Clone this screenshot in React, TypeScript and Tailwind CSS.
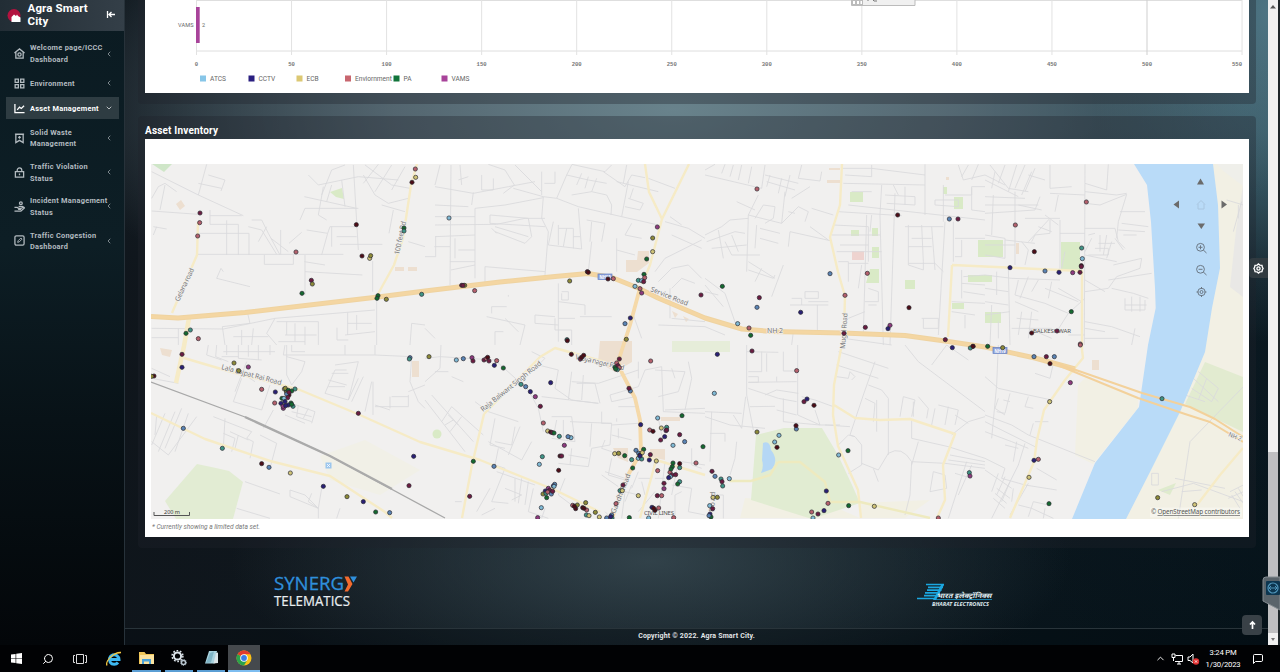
import React from "react";
import { LuChevronLeft, LuChevronDown, LuSearch, LuMessageSquare, LuChevronUp } from "react-icons/lu";

type Tile = { x: number; y: number; streets: string; dots: string };

const dotColors: Record<string, string> = {
  c: "#7fb9d4",
  b: "#5a84b4",
  n: "#2a2075",
  y: "#cfc377",
  o: "#8d8a38",
  r: "#b5606c",
  g: "#14692f",
  t: "#3f9485",
  v: "#8e3a7e",
  p: "#6b1c40",
  m: "#4d0d16",
};

/* Streets and markers of each map tile; one map pixel is three tile units. */
const tiles: Tile[] = [
  {
    x: 145,
    y: 155,
    streets:
      "M20 50L160 120L295 182M160 120L185 28M20 168L160 178M195 165V208H280V300M195 182H290M245 196V300M158 235H312V300M158 298H595M358 300V328H445V300M20 130L40 95L60 85L95 110M60 90L45 165M190 60L240 75L228 108M160 85L230 100M25 215L65 222M25 240L35 215M320 195L350 195L370 235L405 300M310 215L350 225L395 298M340 260L365 215M407 225V298M378 250L430 290M432 265L470 232M480 300V420M480 350L652 360M478 320L540 330M215 370L315 395M215 370L228 340L235 350M485 225L548 235L555 215H635M548 235L530 300M560 215V275M575 245H635M585 268H712M625 30L640 285M640 160H480L465 195M478 125L635 160M490 60L520 90L640 65L760 75M530 120L560 45L600 30M535 95L520 180L545 195M560 90L545 140M590 75L600 155M655 60L690 120L730 145L790 130M660 30L740 90L795 100M700 28L655 85M740 30L690 110M780 35L740 105M710 150L780 170M745 165L732 235M790 260L840 275M683 318V410M20 520L235 522L390 490L690 465M308 475L315 505L232 515L240 570M390 490L365 535L395 570M395 500H520V570M425 500V540M450 505V560M480 515V570M420 540H515M290 525V570M265 545H370M325 520L320 570M400 560H480M608 472V540M635 480V525M608 505H680M600 540L690 530M576 518V555H610M695 430V570M795 570L800 505L840 510M20 548H100M100 570V520",
    dots: "r811,42 y812,67 m801,82 p165,174 r164,203 r158,243 m634,209 g777,219 t777,228 r453,291 m651,303 y674,310 o677,302 p499,376 o502,387 g471,415 g699,422 g696,430 o724,433 t830,418 t136,525 g123,535 r160,551",
  },
  {
    x: 425,
    y: 155,
    streets:
      "M78 30L75 390M30 95L145 115L250 95L330 80M145 112L140 150M30 150L130 155M30 185H150M30 210L215 208L300 190H360M30 245L150 240M28 275H75M32 245V305H0M90 250V310M100 285H150M75 320H150M78 345L150 330M150 160V370M190 28L240 45L268 90L235 115M170 60V105H205V70M105 30L110 90M130 65L100 75M45 30L30 90M265 100L355 125L350 190L370 230L360 360M355 125L395 130L460 155L590 185L700 210M350 50V120M270 30L350 110M358 85H390V50M395 130L425 60L440 30M425 60L490 75L545 85M440 120L500 110L545 120L560 150L558 180M470 55L455 90M490 65L480 100M515 70L500 110M535 50L600 95L620 60L660 68M575 80L700 110M610 80L590 185M610 130L655 145L645 165L600 155M625 100L615 130M440 28L540 50L560 30M605 30L595 85M150 160L240 150L355 128M195 180V205L360 215M195 180L310 190L320 245L300 265L210 230M210 215L310 245M215 235L200 220M385 200L370 270L470 282L460 160M400 210V270M425 220L415 275M400 220H445V280M445 245H465M485 195L540 205L530 260M500 200L495 260M500 260L490 350M575 250V350M575 285L630 300M620 205L600 240L650 250M180 335L360 350M180 335V388M250 420V425M400 385V560M410 415V435H430V410H410M400 440L480 450V480M200 475V455H245M185 485L300 510L285 570M240 490L280 530M235 530H210V570M330 480V505L400 510M330 480L390 485M400 490H450M390 490V525H440V570M465 485H560M0 520L30 550M690 350L720 310L830 255M700 380L740 340L790 330L830 370M740 400L770 370L810 385M740 240L830 280M720 200L790 220L840 250M735 185L770 210M670 70L750 100M735 400V490M700 510L840 515M740 490L840 500M650 550L625 480",
    dots: "c72,189 v697,216 o683,249 y683,290 g665,312 m487,350 m490,352 o434,378 o119,391 p110,391 p114,391 r149,407 m549,372 r565,371 g657,358 r659,368 t640,376 c650,377 p656,380 c630,394 r645,401 v650,414 n616,489 b600,506 o604,553 p828,420 t426,554 m427,557",
  },
  {
    x: 705,
    y: 155,
    streets:
      "M0 45L30 28M0 60L170 100L180 30M60 28L50 55M85 30L75 65M110 30L100 75M140 35L130 85M180 60L280 85M185 80L270 105M195 60L185 95M230 70L220 115M255 60L240 125M160 120L130 180L125 350M95 140L150 165M130 180L230 205M150 190L175 150L210 155L205 190L180 205M165 220L225 235M240 110L230 205L280 155L310 170L300 200M260 130L315 95M270 175L250 170M0 240L50 215L75 195L130 190M40 225L55 310M5 260L90 230L120 235M20 280L125 270M60 260L80 300H165M80 240L100 290M155 210L150 280M165 250L220 265M250 275L255 230L380 258M315 215L370 255M320 160L385 180M130 320L210 370M130 345L205 370L210 360M170 340L150 380M200 425L235 330M60 415L95 515M0 370L60 415M0 410L40 420M280 70L345 78L350 50M280 70L290 30M0 390L55 455M255 450H370M260 430H290V450M300 410H340V430H300V410M310 440H370M337 450V525M410 40H500L660 60M415 85L660 90M420 60L500 65V30M440 110H500M430 150L840 195M400 170L590 182M530 90L525 180L535 570M570 115L555 570M540 120L630 125V150L545 145M660 28V180M565 90L580 120M600 95V150M690 135H760V155L690 150V135M715 90V200M720 120H800V95H840M760 30L775 75L840 60M790 30L770 65M820 28L800 75M720 200L700 540M610 210V330L655 345V320M620 250H680M650 210L655 320M680 215L690 345M600 215H715M610 275H680M610 325H690L715 350M380 240H490M385 210L490 215V320M405 270H490M395 290H530M400 320H430V380M430 325H490M470 330L460 400M485 180L475 540M525 240H490M500 180L495 230M430 490L480 470M490 400L520 410V440H480M490 450H515M650 490H700V520H655V490M745 200V320M750 250H840M770 255V305H750M770 345V430M770 385L840 390M775 365L840 360M775 410L840 420M740 440L840 445M740 470L810 480M780 480V520M800 100V165L840 170M265 530L260 570M415 550L560 570M0 515L60 540",
    dots: "r156,102 m578,180 b733,192 p759,192 b375,356 r487,355 r420,421 g52,394 p163,428 b156,457 n287,472 m612,458 c98,506 r132,519 g137,541 p481,517 v555,511 n549,521 p417,535 p721,554 p804,574",
  },
  {
    x: 985,
    y: 155,
    streets:
      "M15 30L70 100L130 110M60 30L40 85M95 30L70 110M140 50L110 120M120 30L90 100M0 60L60 90M30 50L20 100M150 40L120 110M0 75L100 125M130 60L180 75M300 28L298 570M300 85L365 105L370 28M300 110L395 120L425 115M300 145L345 150L425 118L400 200L395 250M405 170H480M410 205L490 215M400 225L480 230M195 30V100L260 95M195 115L300 120M220 120L210 170M165 125L150 165L0 175M0 125L120 130M90 110V330M25 120L20 240M0 150H160M100 150L170 165M180 180L220 210M195 190L130 260M195 195V235L150 240L140 260M160 215L200 230M225 195V350M225 235H300M120 190H225M110 260L130 285L120 330M0 240L60 250V310L0 300M0 270H90M60 255L150 265M240 290L230 340M300 220H390L400 260L420 280M310 240L330 235M320 250L300 290M330 280H370V300H310M345 240V290M365 240L355 300M380 260L365 310M340 265H390M390 250L415 285M415 240H455M300 300L395 320M385 330L470 310L465 340L395 365L370 400L300 410M300 375L360 410M380 400L445 415L490 430M420 430V465H480V435M440 425V470M465 425V470M420 450H485M370 375L500 355M0 360L80 370L225 375M70 335L75 570M100 375L90 420L180 445M130 365L105 430M160 375L140 410M180 400L280 440M200 380L190 430M220 400L290 440M180 445L250 475L300 430M250 475L215 530M90 440L160 470M110 470L100 540M140 470L130 550M95 490L160 495M80 520H200M130 520L200 550M0 400L70 410M0 440L70 450M20 450L15 570M35 350V420M0 480L75 470M40 500V550M300 500L380 515L465 545M300 520L360 530M300 550H400M450 520L440 570M250 540H300M725 135L775 150M770 140L745 230M760 150V190",
    dots: "r304,141 r91,210 m148,290 t290,279 c292,311 m289,332 p289,335 p285,352 v263,353 n222,352 b180,348 n75,338 g259,470 p216,528 m140,534 r286,567",
  },
  {
    x: 145,
    y: 345,
    streets:
      "M20 100L100 115M190 0L185 30L230 45M215 0L212 35L250 50M245 0V30M280 0V40L350 45M310 0V35M340 0V45M375 0V30M235 20H390M230 35H280M420 0L415 30H600L690 30V0M425 0V90L440 120M425 35L480 50L470 80L440 120M440 0V20H480M600 0V30M690 30L800 35M800 35L795 110L820 170L840 190M605 75H570L540 145L610 165L640 50M570 60L640 50M560 85H610M550 105L605 120M550 125H600M610 165L640 100M655 95L620 170M680 110L660 200M684 110V210M690 185H790V150M735 155V190M740 155H790M690 180L735 195M790 140L840 120M305 50L270 140M290 100L265 170L350 195L375 120M300 90L330 110M440 175L510 200L500 235M460 180L455 215L500 230M490 190L475 220M440 200L500 215M420 210L480 235M385 195L355 250M205 215L320 260L305 280L325 290L315 340M240 220L235 310M255 260L310 285M235 265L270 280L260 320M280 270L270 310M345 270L395 295L375 370M110 190L60 310M130 205L90 320M155 215L70 330M35 210L30 270M60 205L20 300M90 200L40 320M20 290L70 330M300 410L405 447M275 490L375 520M435 435L480 450L520 490L530 430M435 455L520 490V520M435 435V455M520 490L490 470L500 445M585 490L575 520M20 70L75 95",
    dots: "p111,28 n111,67 o267,54 o281,77 v310,66 r350,133 n391,141 r389,174 m27,93 o20,94 y418,132 g424,136 o421,130 o425,142 g430,136 t450,132 g440,138 m432,150 b425,147 p428,158 g411,160 c417,160 n420,170 n408,175 g438,174 n430,180 t444,184 v415,190 v414,184 n422,182 g440,178 p432,142 b115,250 t232,310 m350,356 b372,367 y436,384 n535,424 o606,455 n655,470 g692,501 b734,503 p640,205 n806,334 p792,422 b795,38 t793,42",
  },
  {
    x: 425,
    y: 345,
    streets:
      "M48 0L45 70L0 110M0 40L45 35L210 45L310 135L340 190L355 260M70 80H30M80 95L115 110M0 165L120 320M20 150L145 290M50 230L80 185L175 270M75 260L110 215M100 240L70 210M85 225L60 240M150 170L190 200L280 230M320 20L360 40L340 60L400 75L390 130L440 165L520 175M440 80L430 165M455 115H510L525 175M475 90L470 165M440 110L520 115L640 75M350 155L520 175M555 150L640 125L660 75L710 65L715 200M555 150L560 170L630 155M580 185H640M690 75L780 80L760 140L700 155M790 50L800 100L780 195M640 50V100M740 70L750 100M715 200L840 205M720 195L840 190M700 220L710 270M210 220L195 300L240 310M270 245L260 300L210 290M285 245L250 330M190 290L290 345L320 290M380 215H440L450 290L380 280M395 225L385 275M415 225V280M435 230L560 235L555 300L500 310L490 365L400 355M500 235L495 305M530 200V235H560M560 240L640 235M540 285L530 310L560 320M575 220V230M560 270L620 285M580 250V280M440 310L435 360M430 330L490 340M220 310L210 360L240 370L200 470L250 475M195 430L155 500M240 430L290 450L260 465M270 400V470M290 400L280 475M310 410L300 480M215 380L330 420M325 430L310 500L370 520M360 490L350 520M540 380L600 400M530 390L580 425M560 340L550 390L600 405M620 420L600 470M640 380L620 430M690 340L680 400L640 400M720 350L700 520M760 350L740 450M770 350L840 360M740 420L800 430L790 500L840 510M800 310V360L830 370M650 410L660 450M640 500L690 440M590 520L600 440L640 450M690 400H720M420 400L400 450L440 480M560 520L540 500M750 510V450L770 440M90 470H110M170 510L210 490",
    dots: "o12,35 c94,45 b115,41 v141,38 p144,48 p177,45 r184,41 m188,37 p192,48 n208,61 r215,47 g235,69 t288,118 b302,125 n316,140 v331,155 p346,184 r355,234 y368,258 m377,261 p382,263 g387,264 t403,274 c438,278 b429,275 v418,301 m405,333 p410,333 t352,335 c343,358 m401,376 g145,349 b207,364 p134,454 n377,113 m439,28 p466,42 m470,37 m476,31 p583,42 r575,54 g570,67 p579,62 r583,68 t577,74 g572,72 b616,138 p612,130 r677,48 n647,239 c698,219 g771,212 r674,255 m684,259 y709,249 t725,247 v723,257 p725,255 n719,275 p707,285 p764,269 b779,290 c744,301 g834,305 b633,316 g656,313 b641,325 m645,330 y652,323 c640,340 t650,342 y569,326 o581,325 g599,332 t620,344 p676,329 n673,345 y694,348 g623,369 n645,333 g744,354 g742,365 t764,368 m764,356 r813,354 r698,377 r735,382 g738,372 p741,390 c736,395 n731,398 p752,389 p717,415 v717,431 t764,410 g758,417 p594,420 t585,437 y592,437 y640,452 p697,452 r710,452 n681,487 m690,496 r701,489 c671,519 r746,518 m686,490 b389,418 n385,423 c387,424 v370,430 n361,438 p374,436 o354,447 t363,445 b379,447 p383,439 g365,458 r368,441 c349,488 v338,518 r573,476 b560,510 b545,519 t561,519 n557,515 g613,518 r443,481 o457,480 m452,491 o482,473 m473,488 r485,495 t484,510 y492,512 o511,502 y523,516 m448,484 m477,490",
  },
  {
    x: 705,
    y: 345,
    streets:
      "M125 0V150L145 255M125 20L220 22M170 20V80M185 25V80M170 80H130M130 95H160V112H130M130 130L220 160L275 170M130 112L275 110M235 20V78H275M278 0V210L345 240M180 150L215 135L280 145M135 185L210 184M122 155L110 250L85 210M215 95V110M0 200L110 205M0 215L75 240L180 250M235 160V230M345 240L405 240M345 240L330 195M235 230L345 240M275 210L215 195M290 155L330 165L385 185M360 240L435 245M20 200L15 350M15 265H60V290M95 290L90 340L75 390M400 20L550 70M395 60L520 100M395 95L430 100L435 80L450 95L440 105M510 50L475 150L435 270L450 275L470 300V360L430 385M470 355L520 375L550 325Q590 300 620 350L615 450L600 510M490 120L530 135L550 160V330M400 300L430 270L450 275M515 165V260M480 160L510 175L505 230M505 370L520 410M595 155L585 215M595 155L630 165L620 215M640 155L670 190L665 220M625 170V215M690 190L680 240M700 180L760 195L750 240M730 185L720 240M620 225V280L730 305L840 340M620 350L720 355L840 370M735 330L840 350M730 345L840 360M740 270L790 230L840 215M600 0L640 50L840 200M680 60L725 0L790 45M785 350L730 520M800 360L760 450M685 380L720 390L725 430L675 440L685 380M750 385L800 400M750 210L790 235M55 450V520M20 450H55M640 290L620 360",
    dots: "n37,28 p141,18 c28,145 r275,77 p297,170 n306,162 m327,181 o156,261 c222,271 c209,291 m216,307 b274,252 m273,242 c401,330 g429,317 g431,482 n364,438 r369,475 r320,501 p339,507 n357,497 c324,519 y508,484 r700,519 t793,383 v795,393 p21,379 b30,394 t48,402 p51,410 t53,423 c73,401 y24,457 o37,457 p23,491 c14,482 n15,507 g18,516 b12,512 n742,8 t796,9 m804,4",
  },
  {
    x: 985,
    y: 345,
    streets:
      "M40 0L35 120L20 280M0 95L40 130L130 150L200 165M75 145L60 205L35 200M130 155L120 185L145 190M40 160L30 190L60 210M55 165L75 170M150 85L195 100L205 55M0 210L80 240L130 270L330 350M0 230L60 260L150 305M0 260L80 290L130 310M95 290L85 350M120 295L100 360L20 520M60 300L100 310M0 340L60 370L50 400L120 420L215 435M0 375L80 430M40 385L20 440M60 395L35 450M75 410L50 470M25 460L60 490M30 445L65 475M35 430L75 460M130 415L75 510M155 370L215 405M145 470L190 480M150 230H190M145 235L135 270M85 430L80 470M100 480L140 490L205 520M145 470L130 515M180 490L175 520M775 125L615 290L580 520M640 80L700 130L680 170L620 130M625 100L700 170M600 150L660 170M665 100L640 165M530 440L625 415L720 450L775 470M590 440L650 435M570 400L720 430M500 385V420H520V385H500M735 440L775 420M740 450L765 490M750 440L775 475M760 430L775 455M730 460L775 440",
    dots: "g8,4 o53,8 b147,35 p184,35 b208,35 m195,56 v256,113 y194,170 t531,161 r160,343 n147,346 y132,397 g192,476 o518,458 y629,479 r286,0",
  },
];

function Dots({ tile }: { tile: Tile }) {
  return (
    <g stroke="#26262e" strokeWidth="2">
      {tile.dots.split(" ").map((d, i) => {
        const [x, y] = d.slice(1).split(",").map(Number);
        return <circle key={i} cx={x} cy={y} r="6.300" fill={dotColors[d[0]]} />;
      })}
    </g>
  );
}

const highway =
  "M151 316.500L178 318L245 312.500L378 297L425 291L500 282L555 276.500L588 273.500L612 277.500L638 288L658 298L705 318L742 329L772 331.500L843 333L905 335.500L945 341L985 347L1035 358L1075 369";

function CityMap() {
  return (
    <svg width="1092" height="355" viewBox="151 164 1092 355" className="block" fontFamily="Noto Sans, sans-serif">
      <rect x="151" y="164" width="1092" height="355" fill="#f1f0ef" />
      <path d="M1151 164H1243V519H1126L1212 308Z" fill="#f2f0e4" />
      <path d="M1243 185L1236 230L1230 287L1243 297Z" fill="#e9e8e6" />
      <path d="M1217 164H1243V186L1222 170Z" fill="#efefea" />
      <path d="M1085 378L1138 397V408L1093 464L1075 455L1078 385Z" fill="#f2f0e4" />
      <path d="M1205 362L1243 377V432L1185 404Z" fill="#e2ebd0" />
      <path d="M1158 490L1176 483L1170 495Z" fill="#dfebcd" />
      <path d="M320 456L365 440L420 470L380 495L330 480Z" fill="#f1f0e7" />
      <path d="M745 498L830 505L860 518H740ZM860 503L930 500L905 518H860Z" fill="#f2f0e4" />
      <path d="M197 464L216 468L229 471L243 482L233 519H176L165 501Z" fill="#e2ecd3" />
      <path d="M756 435L784 428H822L838 455L852 485L860 503L812 519L751 500Z" fill="#e1ecd2" />
      <path d="M152 164H172L164 172Z" fill="#cfe6c8" />
      <g fill="#d9eac6">
        <path d="M330 192L342 188L344 199L336 197Z" />
        <path d="M850 192H863V202H850ZM872 228H878V236H872ZM872 247H879V258H872ZM870 269H879V283H866ZM905 280H915V289H905ZM954 197H963V209H954ZM978 240H1003V257H978ZM968 275H992V282H968ZM1061 242H1080V270H1061ZM952 303H964V309H952ZM985 312H1001V323H985Z" />
        <path d="M851 230H859V236H851ZM943 187H947V194H943Z" />
        <circle cx="437" cy="434" r="4.500" />
        <path d="M672 341H730V352H672Z" fill="#e6edd9" />
      </g>
      <g fill="#eddfd0">
        <path d="M176 204L181 200L185 206L180 210ZM638 251H649V263L637 272H626V260H637ZM600 341H632V362L615 372L598 362ZM395 267H404V271H395ZM408 267H417V271H408ZM650 449H665V460L650 457ZM613 448H628V462L618 458ZM412 361H419V377H412Z" />
        <path d="M829 168H840V170H829ZM827 180H840V183H827ZM160 348L172 350L170 357L162 355ZM946 177H949V180H946ZM672 311L678 314L675 318ZM683 316L689 319L686 322ZM661 417H680V421H661ZM1092 360H1099V370H1092ZM1016 243H1019V254H1016Z" />
        <path d="M852 251H864V260H852Z" fill="#eed3cf" />
      </g>
      <path d="M763 443Q770 440 771 450Q779 460 772 469L761 473Q764 467 762 460Z" fill="#b5d7f5" />
      {tiles.map((t, i) => (
        <g key={i} transform={`translate(${t.x} ${t.y}) scale(.33333)`}>
          <path d={t.streets} fill="none" stroke="#dadadc" strokeWidth="2.600" strokeLinejoin="round" />
        </g>
      ))}
      <path
        d="M1134 164L1147 185L1151 222L1155 288L1155.7 308L1148 345L1147 352L1139 407L1095 463L1072 519H1126L1150 472L1180 412L1205 352L1212 308L1220 268L1218 205L1213 164Z"
        fill="#b9dbf8"
      />
      <g fill="none" stroke="#f6ebc6" strokeWidth="2.400" strokeLinejoin="round">
        <path d="M198 222L197 255L172 313M417 164L411 185L403 238L394 265L378 294" />
        <path d="M189 318L184 346L176 383" strokeWidth="4.500" />
        <path d="M184 358L228 371L300 390L360 415L420 442L480 460L555 490L600 512" />
        <path d="M151 413L205 439L270 461L330 476L385 512L392 518" />
        <path d="M645 164L649 192L662 219L689 164M662 219L650 265L642 284" />
        <path d="M842 164L840 205L830 237L838 272L845 296L844 333L834 385L833 415L838 446L858 490L861 518" />
        <path d="M834 405L855 418L880 420L910 419L955 434L943 465L945 500L937 518" />
        <path d="M952 265L948 337M952 265L1082 271V350L1083 358L1065 380L1044 410L1037 440L1034 462L1010 518" />
        <path d="M751 481L730 481M751 481L770 475L778 462M778 462L800 462L825 482L830 502L860 502L930 518" stroke="#eeeabf" />
        <path d="M484 414L472 465L462 518M484 414L540 357L555 348L605 362" />
        <path d="M640 455L705 475M657 457L640 518M1243 448L1220 475L1197 505" />
      </g>
      <g fill="none" strokeLinejoin="round">
        <path d={highway} stroke="#efd3a0" strokeWidth="5" />
        <path d={highway} stroke="#f4d6a2" strokeWidth="3" />
        <path d="M640 288L630 325L618 362L622 373L635 398L640 420L641 452L628 475L612 518" stroke="#f5d9a9" strokeWidth="3.800" />
        <path d="M1050 361L1142 393L1190 407L1215 419L1243 437M1060 366L1138 398L1185 414L1210 422L1243 442" stroke="#f3d19b" strokeWidth="2" />
      </g>
      <path d="M151 382L245 417L330 456L445 518" fill="none" stroke="#a8a8a8" strokeWidth="1.300" />
      <path d="M245 417L330 456L392 489" fill="none" stroke="#aaa" strokeWidth="2.400" />
      <g transform="translate(325.500 462.500)">
        <rect width="6" height="6" fill="#9cc6ee" />
        <path d="M1.500 1.500L4.500 4.500M4.500 1.500L1.500 4.500" stroke="#fff" strokeWidth=".8" />
      </g>
      <g fontSize="7" fill="#777" stroke="#f1f0ef" strokeWidth="1.400" paintOrder="stroke">
        <text transform="translate(179 302) rotate(-65)" textLength="36">Gelana road</text>
        <text transform="translate(399 255) rotate(-78)" textLength="34">100 feet Rd</text>
        <text transform="translate(221 369) rotate(15)" textLength="62">Lala Lajpat Rai Road</text>
        <text transform="translate(483 412) rotate(-39)" textLength="76">Raja Balwant Singh Road</text>
        <text transform="translate(650 291) rotate(22)" textLength="40">Service Road</text>
        <text transform="translate(575 359) rotate(13)" textLength="50">Vijaya nagar Road</text>
        <text x="767" y="333" textLength="16">NH 2</text>
        <text transform="translate(845 349) rotate(-86)" textLength="36">Mugal Road</text>
        <text transform="translate(1228 436) rotate(22)" fontSize="6.500" textLength="13.500" lengthAdjust="spacingAndGlyphs">NH 2</text>
        <text transform="translate(615 514) rotate(-68)" textLength="42">Gandhi Road</text>
        <text transform="translate(714 512) rotate(-86)" textLength="20">Road</text>
      </g>
      <g fill="#8fa5dc" stroke="#657fc4" strokeWidth=".7">
        <rect x="598" y="274" width="14" height="5.500" />
        <rect x="993" y="347.500" width="14" height="6" />
      </g>
      <g fontSize="5.500" fontWeight="700" fill="#fff">
        <text x="599.500" y="278.800" textLength="11" lengthAdjust="spacingAndGlyphs">NH19</text>
        <text x="994.500" y="352.600" textLength="11" lengthAdjust="spacingAndGlyphs">NH19</text>
      </g>
      <g fontSize="6" fill="#555">
        <text x="1033" y="333" textLength="38">BALKESHWAR</text>
        <text x="644" y="514.500" textLength="30">CIVIL LINES</text>
      </g>
      {tiles.map((t, i) => (
        <g key={i} transform={`translate(${t.x} ${t.y}) scale(.33333)`}>
          <Dots tile={t} />
        </g>
      ))}
      <g fill="#6b6b6b">
        <path d="M1197 184.500L1200.500 178.500L1204 184.500Z" />
        <path d="M1197.500 223.500H1205L1201.300 229Z" />
        <path d="M1179 200.500V208.500L1173.500 204.500Z" />
        <path d="M1221.500 200.500V208.500L1227 204.500Z" />
      </g>
      <path d="M1197 204.500L1201 200.500L1205 204.500M1198 204V209H1204V204" fill="none" stroke="#a9c6e0" />
      <g fill="none" stroke="#6b7885" strokeWidth="1">
        <circle cx="1200.500" cy="247.300" r="3.900" />
        <path d="M1203.300 250L1206.500 253M1198.500 247.300H1202.500M1200.500 245.300V249.300" />
        <circle cx="1200.500" cy="269.300" r="3.900" />
        <path d="M1203.300 272L1206.500 275M1198.500 269.300H1202.500" />
        <circle cx="1201.500" cy="292" r="3.700" />
        <circle cx="1201.500" cy="292" r="1.500" />
        <path d="M1201.500 287V289M1201.500 295V297M1196.500 292H1198.500M1204.500 292H1206.500" />
      </g>
      <path d="M154 512V515.500H189.500V512" fill="none" stroke="#555" strokeWidth="1" />
      <text x="164" y="514" fontSize="5.500" fill="#333" textLength="16">200 m</text>
      <rect x="1150" y="507.500" width="92" height="10" fill="#fff" opacity=".35" />
      <text x="1151" y="514.300" fontSize="6.300" fill="#555" textLength="5">©</text>
      <text x="1157.500" y="514.300" fontSize="6.300" fill="#555" textDecoration="underline" textLength="82.500">OpenStreetMap contributors</text>
    </svg>
  );
}

function AssetChart() {
  const legend = [
    ["ATCS", "#87c6e8", 200],
    ["CCTV", "#2a1f80", 248.500],
    ["ECB", "#dcc873", 296.500],
    ["Enviornment", "#c8666f", 345],
    ["PA", "#11743a", 393.500],
    ["VAMS", "#a8439a", 441.500],
  ] as const;
  return (
    <svg width="1104" height="93" viewBox="145 0 1104 93" className="block" fontFamily="Roboto, sans-serif">
      <path d="M196 .5H1242M196 51H1242" stroke="#dedede" />
      {Array.from({ length: 12 }, (_, i) => (
        <g key={i}>
          <path d={`M${196.500 + i * 95.050} 0V55`} stroke={i === 10 ? "#cfcfcf" : "#e2e2e2"} />
          <text
            x={i === 11 ? 1237 : 196.500 + i * 95.050}
            y="66"
            fontSize="5.600"
            fontFamily="Liberation Mono, monospace"
            fontWeight="700"
            fill="#777"
            textAnchor="middle"
          >
            {i * 50}
          </text>
        </g>
      ))}
      <rect x="196" y="7" width="3.700" height="36" fill="#a8439a" />
      <text x="178" y="26.500" fontSize="5.600" fill="#666" textLength="15.500">VAMS</text>
      <text x="202" y="26.500" fontSize="5.500" fill="#666">2</text>
      {legend.map(([name, color, x]) => (
        <g key={name}>
          <rect x={x} y="75.500" width="6" height="6" fill={color} />
          <text x={x + 10} y="81" fontSize="6.600" fill="#666">{name}</text>
        </g>
      ))}
      <path d="M851.500 0V5.500H915V0" fill="#f0f0f0" stroke="#bbb" />
      <path d="M852 0H863V5H852Z" fill="#bbb" />
      <path d="M853 1H855V4H853ZM857 1H859V4H857ZM860.500 1H862V4H860.500Z" fill="#fff" />
      <path d="M867 0H869M873 0L874 1H877" stroke="#777" fill="none" />
    </svg>
  );
}

function Icon({ children }: { children: React.ReactNode }) {
  return (
    <svg width="11" height="11" viewBox="0 0 24 24" fill="none" stroke="currentColor" strokeWidth="2.800" className="shrink-0">
      {children}
    </svg>
  );
}

const menu: { label: string[]; icon: React.ReactNode; active?: boolean }[] = [
  {
    label: ["Welcome page/ICCC", "Dashboard"],
    icon: <Icon><path d="M1 11L12 2L23 11M4 9V22H20V9" /><circle cx="12" cy="14" r="3.500" /></Icon>,
  },
  {
    label: ["Environment"],
    icon: <Icon><path d="M2.500 2.500H9.500V9.500H2.500ZM14.500 2.500H21.500V9.500H14.500ZM2.500 14.500H9.500V21.500H2.500ZM14.500 14.500H21.500V21.500H14.500Z" /></Icon>,
  },
  {
    label: ["Asset Management"],
    active: true,
    icon: <Icon><path d="M2 2V21H23M7 15L12 9L16 12L22 6" /></Icon>,
  },
  {
    label: ["Solid Waste", "Management"],
    icon: <Icon><path d="M4 3H20V21L12 16L4 21ZM2 2.500H22M12 6.500V12.500M9 9.500H15" /></Icon>,
  },
  {
    label: ["Traffic Violation", "Status"],
    icon: <Icon><path d="M3 10H21V22H3ZM7 10V7A5 5 0 0 1 17 7V10M12 14V18" /></Icon>,
  },
  {
    label: ["Incident Management", "Status"],
    icon: (
      <Icon>
        <path d="M1 14H7L10 16H14V18H9M14 17L21 13L23 15L15 22H1" />
        <circle cx="15" cy="5" r="3" />
        <path d="M10 12H20" />
      </Icon>
    ),
  },
  {
    label: ["Traffic Congestion", "Dashboard"],
    icon: <Icon><rect x="2" y="2" width="20" height="20" rx="3" /><path d="M8 16L9 12.500L15 6.500L17.500 9L11.500 15Z" strokeWidth="2" /></Icon>,
  },
];

function Sidebar() {
  return (
    <aside className="flex w-[125px] shrink-0 flex-col border-r border-[#27323a] bg-[linear-gradient(180deg,#0b1b22_0%,#0d1e25_38%,#081217_65%,#030609_100%)]">
      <header className="flex h-[31px] items-start bg-[linear-gradient(90deg,#222d35,#343f48)] pl-[7px] pt-[1.500px]">
        <svg width="16" height="18" viewBox="0 0 16 18" className="mt-[5px] shrink-0">
          <circle cx="7" cy="8.500" r="6.500" fill="#b3123f" />
          <path d="M4.500 15V10L7 7.500L9 9L10 7.500L11 9L13.500 10.500V15Z" fill="#fff" />
        </svg>
        <div className="ml-[4.500px] w-[70px] text-[11.500px] font-bold leading-[13.200px] tracking-[.15px] text-white">
          Agra Smart
          <br />
          City
        </div>
        <svg width="10" height="9" viewBox="0 0 10 9" className="ml-[8.500px] mt-[8px]" fill="none" stroke="#fff" strokeWidth="1.300">
          <path d="M1.500 1V8M9 4.500H3M5.500 2L3 4.500L5.500 7" />
        </svg>
      </header>
      <nav className="flex flex-col gap-[3.200px] px-[5.500px] pt-[7px]">
        {menu.map((m) => (
          <div
            key={m.label[0]}
            className={
              "relative flex items-center pl-[8px] text-[7.400px] font-bold leading-[11.300px] tracking-[.26px] " +
              (m.label.length === 2 ? "h-[31px] " : "h-[22px] ") +
              (m.active ? "bg-[#2e3c42] text-white" : "text-[#b3bbc0]")
            }
          >
            {m.icon}
            <span className="ml-[5.500px] flex-1 whitespace-nowrap pt-[.500px]">
              {m.label.map((l) => (
                <span key={l} className="block">{l}</span>
              ))}
            </span>
            <span className="absolute right-[6px]">
              {m.active ? <LuChevronDown size={8} /> : <LuChevronLeft size={8} />}
            </span>
          </div>
        ))}
      </nav>
    </aside>
  );
}

function SynergyLogo() {
  return (
    <svg width="84" height="34" viewBox="0 0 84 34" fontFamily="Open Sans, sans-serif" className="overflow-visible">
      <text x="0" y="15" fontSize="18" fill="#2f8fdc" stroke="#2f8fdc" strokeWidth=".3" textLength="70" lengthAdjust="spacingAndGlyphs">SYNERG</text>
      <path d="M70.500 1.500H74.500L78.500 9L74 16.500H70.500L74 9.500Z" fill="#f26a2e" />
      <path d="M76 1.500H83L79.500 7.500Z" fill="#2f8fdc" />
      <text x="0" y="30.500" fontSize="13.800" fill="#e8edf0" stroke="#e8edf0" strokeWidth=".2" textLength="76" lengthAdjust="spacingAndGlyphs">TELEMATICS</text>
    </svg>
  );
}

function BharatLogo() {
  return (
    <svg width="78" height="24" viewBox="0 0 78 24" fontFamily="Noto Sans, sans-serif" fontStyle="italic" fontWeight="700">
      <g stroke="#1ba7e0" strokeWidth="1.700">
        <path d="M9 1.500H27M11 4.300H26M10 7.100H24.500M8 9.900H23M7 12.700H21M0 15.500H19" />
      </g>
      <path d="M24 2H27L19 17H16Z" fill="#1ba7e0" />
      <text transform="translate(19.500 14.500) skewX(-12)" fontSize="7" fill="#dfe9ee" textLength="55" lengthAdjust="spacingAndGlyphs">भारत इलेक्ट्रॉनिक्स</text>
      <path d="M17 16.500H75" stroke="#1ba7e0" strokeWidth=".7" />
      <text x="15" y="22.500" fontSize="6" fill="#dfe9ee" textLength="57" lengthAdjust="spacingAndGlyphs">BHARAT ELECTRONICS</text>
    </svg>
  );
}

function Scrollbar() {
  return (
    <div className="flex w-[12px] shrink-0 flex-col items-center border-r-2 border-[#1d2528] bg-[#f0f0f0]">
      <svg width="6" height="14" viewBox="0 0 6 14"><path d="M0 8.500L3 5L6 8.500Z" fill="#555" /></svg>
      <div className="mt-[438px] h-[181px] w-full bg-[#bfbfc1]" />
      <svg width="6" height="12" viewBox="0 0 6 12"><path d="M1 5L3 8L5 5Z" fill="#777" /></svg>
    </div>
  );
}

function Taskbar() {
  return (
    <footer className="flex h-[27px] items-stretch bg-[#010204] text-white">
      <div className="flex w-8 items-center justify-center">
        <svg width="11" height="11" viewBox="0 0 12 12" fill="#fff">
          <path d="M0 1.700L5 1V5.700H0ZM5.700 .9L12 0V5.700H5.700ZM0 6.400H5V11L0 10.300ZM5.700 6.400H12V12L5.700 11.100Z" />
        </svg>
      </div>
      <div className="flex w-8 items-center justify-center">
        <LuSearch size={12} className="-scale-x-100" />
      </div>
      <div className="flex w-8 items-center justify-center">
        <svg width="14" height="12" viewBox="0 0 14 12" fill="none" stroke="#ddd">
          <path d="M3.500 1.500H10.500V10.500H3.500ZM2 2.500H.5V9.500H2M12 2.500H13.500V9.500H12" />
        </svg>
      </div>
      <div className="flex w-9 items-center justify-center">
        <svg width="16" height="16" viewBox="0 0 16 16" fill="none">
          <path d="M3.500 8.500H13A4.800 4.800 0 1 0 12 11.500" stroke="#3db8f0" strokeWidth="3" />
          <path d="M1 14.500C-1 10 8 1 15 1.500C13 1.500 10 2 8 3.500" stroke="#f5c842" strokeWidth="1.300" />
        </svg>
      </div>
      <div className="flex w-[29px] items-center justify-center border-b-2 border-[#5a9ed4]">
        <svg width="15" height="14" viewBox="0 0 15 14">
          <path d="M0 1H5.500L7 3H15V13H0Z" fill="#f0c75a" />
          <path d="M1 4H15V13H1Z" fill="#fbe3a0" />
          <path d="M3 8H12V13H10V10.500H5V13H3Z" fill="#4aa3dc" />
        </svg>
      </div>
      <div className="ml-1 flex w-[28px] items-center justify-center border-b-2 border-[#5a9ed4]">
        <svg width="16" height="16" viewBox="0 0 16 16" fill="none">
          <circle cx="6.500" cy="6" r="3.600" stroke="#dce4ea" strokeWidth="2" />
          <circle cx="6.500" cy="6" r="5.400" stroke="#dce4ea" strokeWidth="1.500" strokeDasharray="1.700 1.700" />
          <circle cx="12.500" cy="12.500" r="2" stroke="#b8c6d0" strokeWidth="1.400" />
          <circle cx="12.500" cy="12.500" r="3" stroke="#b8c6d0" strokeWidth="1" strokeDasharray="1 1" />
        </svg>
      </div>
      <div className="ml-1 flex w-[28px] items-center justify-center border-b-2 border-[#5a9ed4]">
        <svg width="15" height="15" viewBox="0 0 15 15">
          <path d="M5 1H13L10.500 13.500H1Z" fill="#a9d2de" />
          <path d="M6 3L10 1.500L7 12.500L2 13Z" fill="#7fb4c5" />
          <path d="M12 3L14 2.500L14 13L9.500 13.500Z" fill="#dbe5e8" />
        </svg>
      </div>
      <div className="ml-[3px] flex w-8 items-center justify-center border-b-2 border-[#7dbdf0] bg-[#45494d]">
        <svg width="16" height="16" viewBox="0 0 16 16">
          <circle cx="8" cy="8" r="7.500" fill="#fbc116" />
          <path d="M8 8L1.500 4.250A7.500 7.500 0 0 1 14.500 4.250H8Z" fill="#e23b2e" />
          <path d="M8 8L1.500 4.250A7.500 7.500 0 0 0 8 15.500L11.250 9.900Z" fill="#2ba24c" />
          <circle cx="8" cy="8" r="3.800" fill="#fff" />
          <circle cx="8" cy="8" r="2.900" fill="#3b7de8" />
        </svg>
      </div>
      <div className="ml-auto flex items-center">
        <LuChevronUp size={11} />
        <svg width="13" height="12" viewBox="0 0 13 12" fill="none" stroke="#fff" className="ml-[5px]">
          <path d="M4.500 2.500H11.500V8.500H4M8 8.500V11M6 11H10M1 1V4.500H4V1H1M2.500 4.500V8" />
        </svg>
        <svg width="13" height="12" viewBox="0 0 13 12" className="ml-[3px]">
          <path d="M1 4H3L6 1V10L3 7.500H1Z" fill="none" stroke="#fff" />
          <circle cx="9" cy="8.500" r="3.200" fill="#e03030" />
          <path d="M7.800 7.300L10.200 9.700M10.200 7.300L7.800 9.700" stroke="#fff" strokeWidth=".8" />
        </svg>
        <div className="ml-[4px] w-[38px] text-center text-[7.700px] leading-[12px] tracking-tight">
          3:24 PM
          <br />
          1/30/2023
        </div>
        <LuMessageSquare size={12} className="ml-[10px] mr-[16px]" />
      </div>
    </footer>
  );
}

export default function App() {
  return (
    <div className="flex h-[672px] w-[1280px] flex-col overflow-hidden bg-black font-[Roboto,sans-serif]">
      <div className="relative flex h-[645px]">
        <Sidebar />
        <main className="flex w-[1143px] flex-col bg-[radial-gradient(ellipse_620px_260px_at_48%_17%,rgba(108,134,143,.95),rgba(96,114,124,.8)_45%,transparent),radial-gradient(ellipse_180px_330px_at_100%_2%,rgba(85,125,140,.85),transparent),radial-gradient(ellipse_420px_150px_at_46%_87%,rgba(58,76,84,.8),transparent),linear-gradient(90deg,rgba(16,22,28,.9),rgba(45,56,66,.25)_40%,rgba(10,40,50,.2)_100%),linear-gradient(180deg,#2a4854_0%,#2a4854_20%,#0c161e_42%,#040d13_100%)]">
          <section className="ml-[13px] mr-[12px] h-[104px] rounded-b bg-[#1f232c]/35 pl-[7px] pr-[7px]">
            <div className="h-[93px] w-[1104px] bg-white">
              <AssetChart />
            </div>
          </section>
          <section className="ml-[13px] mr-[12px] mt-[12px] h-[432px] rounded bg-[#1f232c]/35 pl-[7px] pr-[7px]">
            <h2 className="h-[22.500px] pt-[8px] text-[10px] font-bold leading-[14px] tracking-[.18px] text-white">Asset Inventory</h2>
            <div className="h-[398.500px] w-[1104px] bg-white pl-[6px] pt-[25.500px]">
              <CityMap />
              <p className="pl-[1px] pt-[2.500px] text-[6.600px] italic leading-[11px] text-[#777]">* Currently showing a limited data set.</p>
            </div>
          </section>
          <div className="flex h-[79.500px] items-start justify-between pl-[149px] pr-[273px] pt-[27px]">
            <SynergyLogo />
            <div className="pt-[8px]">
              <BharatLogo />
            </div>
          </div>
          <div className="flex-1 border-t border-[#29343a] bg-[#030a0e]/40 pt-[2.500px] text-center text-[7px] font-bold leading-[11px] tracking-[.17px] text-[#e2e6e8]">
            Copyright © 2022. Agra Smart City.
          </div>
        </main>
        <Scrollbar />
        <div className="absolute left-[1249px] top-[258px] flex h-[20px] w-[19px] items-center justify-center rounded-l bg-[#303a40]">
          <svg width="11" height="11" viewBox="0 0 24 24" fill="none" stroke="#fff" strokeWidth="3">
            <path d="M12 2L15 4.500L19.500 5L20.500 9.500L22 12L20.500 14.500L19.500 19L15 19.500L12 22L9 19.500L4.500 19L3.500 14.500L2 12L3.500 9.500L4.500 5L9 4.500Z" />
            <circle cx="12" cy="12" r="3.500" />
          </svg>
        </div>
        <div className="absolute left-[1242px] top-[615px] flex h-[20px] w-[20px] items-center justify-center rounded bg-[#394147]">
          <svg width="9" height="10" viewBox="0 0 9 10" fill="none" stroke="#fff" strokeWidth="1.700"><path d="M4.500 9V2M2 4.500L4.500 2L7 4.500" /></svg>
        </div>
        <svg width="18" height="36" viewBox="0 0 18 36" className="absolute left-[1262px] top-[576px]">
          <path d="M4 1H18V34L1 25V4Q1 1 4 1Z" fill="#5a646b" stroke="#838b90" />
          <rect x="4" y="5" width="14" height="14" rx="1" fill="#0d3650" />
          <circle cx="11" cy="12" r="5" fill="none" stroke="#4f94b9" strokeWidth="1.200" />
          <path d="M7 12H15M9 10L7 12L9 14M13 10L15 12L13 14" fill="none" stroke="#4f94b9" />
        </svg>
      </div>
      <Taskbar />
    </div>
  );
}
